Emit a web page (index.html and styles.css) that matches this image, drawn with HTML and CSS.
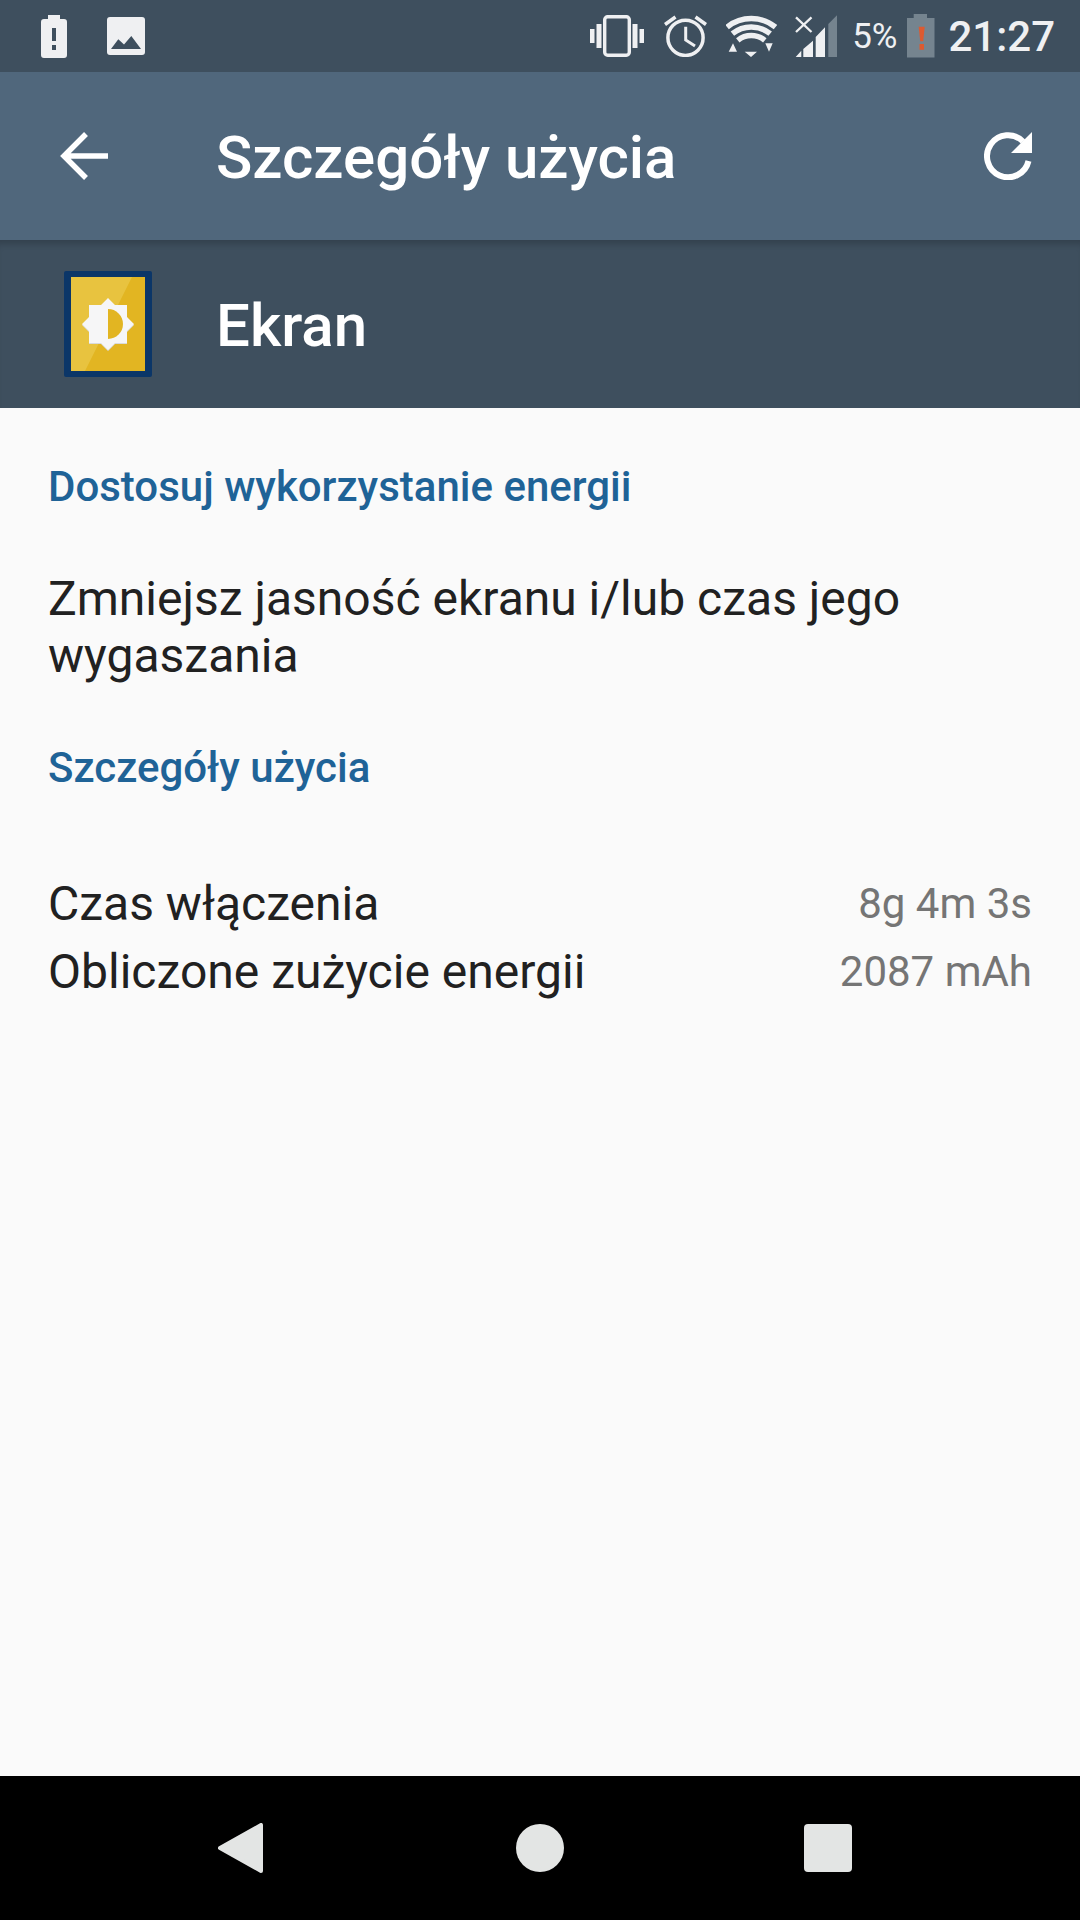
FILE: index.html
```html
<!DOCTYPE html>
<html lang="pl">
<head>
  <meta charset="UTF-8">
  <meta name="viewport" content="width=device-width, initial-scale=1.0">
  <title>Szczegóły użycia</title>
  <link rel="stylesheet" href="styles.css">
</head>
<body>
  <div class="screen">
    <div class="status-bar">
      <div class="status-left">
        <!-- battery alert -->
        <svg width="26" height="43" viewBox="0 0 26 43">
          <path fill="#eff0f2" d="M7 0h12v4h4q3 0 3 3v33q0 3-3 3H3q-3 0-3-3V7q0-3 3-3h4z"/>
          <path fill="#3e4f5e" d="M11 13h4v13h-4zM11 30h4v5h-4z"/>
        </svg>
        <!-- picture -->
        <svg width="38" height="38" viewBox="0 0 38 38">
          <rect width="38" height="38" rx="3" fill="#eff0f2"/>
          <path fill="#3e4f5e" d="M4 32l7.300-9.700 5.700 5.200 7.300-8.500 9.700 13z"/>
        </svg>
      </div>
      <div class="status-right">
        <svg class="ic-vib" width="54" height="42" viewBox="0 0 54 42">
          <rect x="14.700" y="1.700" width="24.600" height="38.600" rx="3" fill="none" stroke="#eff0f2" stroke-width="3.400"/>
          <path fill="#eff0f2" d="M0 14h4.500v14H0zM6.500 9h5v24h-5zM42.500 9h5v24h-5zM49.500 14H54v14h-4.500z"/>
        </svg>
        <svg class="ic-alarm" width="43" height="42" viewBox="0 0 43 42">
          <circle cx="21.500" cy="22.800" r="17.600" fill="none" stroke="#eff0f2" stroke-width="3.500"/>
          <path fill="none" stroke="#eff0f2" stroke-width="3" d="M21.700 11.700V25l9.300 6"/>
          <path fill="none" stroke="#eff0f2" stroke-width="3.500" d="M1 9.500L11.500 2M42 9.500L31.500 2"/>
        </svg>
        <svg class="ic-wifi" width="51" height="42" viewBox="0 0 51 42">
          <path fill="none" stroke="#eff0f2" stroke-width="5.500" d="M1.100 12.100A38.500 38.500 0 0 1 49.500 12.100M6.400 18.700A30 30 0 0 1 44.200 18.700M11.800 25.300A21.500 21.500 0 0 1 38.800 25.300"/>
          <path fill="#eff0f2" d="M18.700 36.700H31L25 42zM2.700 36.700H11L7 28.300zM39.300 28.300h7.400L43 36.700z"/>
        </svg>
        <svg class="ic-signal" width="42" height="42" viewBox="0 0 42 42">
          <path fill="#75848f" d="M33.300 9L42.300 0v42h-9z"/>
          <path fill="#eff0f2" d="M.7 42L6.300 35.700V42zM8.300 42V34L18 25.700V42zM20.700 42V22L30 12.300V42z"/>
          <path fill="none" stroke="#eff0f2" stroke-width="2.300" d="M1 2.300L16.500 17M16.500 2.300L1 17"/>
        </svg>
        <span class="batt-pct">5%</span>
        <svg class="ic-batt" width="28" height="44" viewBox="0 0 28 44">
          <path fill="#75848f" d="M6.700 0H20v4h7.500v39.500H0V4h6.700z"/>
          <path fill="#dd5a30" d="M11.700 12.700h6l-1.500 14.500h-3zM12.500 30h4.500v5.700h-4.500z"/>
        </svg>
        <span class="clock">21:27</span>
      </div>
    </div>

    <div class="toolbar">
      <svg width="48" height="48" viewBox="0 0 48 48">
        <path fill="none" stroke="#fff" stroke-width="5.500" d="M48 24H4M26 2L4 24l22 22"/>
      </svg>
      <h1 class="toolbar-title">Szczegóły użycia</h1>
      <svg width="48" height="48" viewBox="0 0 48 48">
        <path fill="none" stroke="#fff" stroke-width="6" d="M44.500 29A21 21 0 1 1 39 9.500"/>
        <path fill="#fff" d="M48 0v21H27z"/>
      </svg>
    </div>

    <div class="app-header">
      <svg width="88" height="106" viewBox="0 0 88 106">
        <rect width="88" height="106" rx="2" fill="#0b3668"/>
        <rect x="7" y="6" width="74" height="94" fill="#e2b522"/>
        <path fill="#e8c33f" d="M7 6h61L21 100H7z"/>
        <path fill="#d9dadb" d="M44 28l26 26-7 7v12H51l-7 7-7-7H25V61l-7-7z"/>
        <path fill="#f6f6f7" d="M44 27l7 7h12v12l7 7-7 7v12H51l-7 7-7-7H25V60l-7-7 7-7V34h12z"/>
        <path fill="#e2b522" d="M44 38a15 15 0 0 1 0 30z"/>
      </svg>
      <div class="app-name">Ekran</div>
    </div>

    <div class="content">
      <div class="section-title first">Dostosuj wykorzystanie energii</div>
      <p class="tip">Zmniejsz jasność ekranu i/lub czas jego wygaszania</p>
      <div class="section-title second">Szczegóły użycia</div>
      <div class="usage">
        <div class="usage-row">
          <span class="usage-label">Czas włączenia</span>
          <span class="usage-value">8g 4m 3s</span>
        </div>
        <div class="usage-row">
          <span class="usage-label">Obliczone zużycie energii</span>
          <span class="usage-value">2087 mAh</span>
        </div>
      </div>
    </div>

    <div class="nav-bar">
      <svg width="45" height="50" viewBox="0 0 45 50">
        <path fill="#e3e5e4" stroke="#e3e5e4" stroke-width="4" stroke-linejoin="round" d="M2 25L43 2v46z"/>
      </svg>
      <div class="nav-home"></div>
      <div class="nav-recent"></div>
    </div>
  </div>
</body>
</html>
```
FILE: styles.css
```css
* {
  margin: 0;
  padding: 0;
  box-sizing: border-box;
}

body {
  font-family: 'Roboto', 'Liberation Sans', sans-serif;
  background: #fafafa;
  color: #212121;
}

.screen {
  width: 1080px;
  height: 1920px;
  display: flex;
  flex-direction: column;
  overflow: hidden;
}

.status-bar {
  height: 72px;
  background: #3e4f5e;
  display: flex;
  align-items: center;
  justify-content: space-between;
  padding: 0 25px 0 41px;
  color: #eff0f2;
}

.status-left {
  display: flex;
  align-items: center;
  gap: 40px;
}

.status-right {
  display: flex;
  align-items: center;
}

.ic-vib { margin-right: 20px; }
.ic-alarm { margin-right: 19px; }
.ic-wifi { margin-right: 18px; }
.ic-signal { margin-right: 15px; }

.batt-pct {
  font-size: 35px;
  margin-right: 10px;
}

.ic-batt { margin-right: 13px; }

.clock {
  font-size: 42px;
  font-weight: 500;
}

.toolbar {
  height: 168px;
  background: #50677c;
  display: flex;
  align-items: center;
  padding: 0 48px 0 60px;
}

.toolbar-title {
  flex: 1;
  margin-left: 108px;
  padding-top: 2px;
  font-size: 60px;
  font-weight: 500;
  color: #fff;
}

.app-header {
  height: 168px;
  background: #3e4f5e;
  display: flex;
  align-items: center;
  padding: 0 0 0 64px;
  box-shadow: inset 0 8px 6px -4px rgba(0, 0, 0, 0.18);
}

.app-name {
  margin-left: 64px;
  padding-top: 2px;
  font-size: 60px;
  font-weight: 500;
  color: #fff;
}

.content {
  flex: 1;
  padding: 0 48px;
}

.section-title {
  font-size: 42px;
  font-weight: 500;
  color: #1f6397;
}

.section-title.first { margin-top: 54px; }
.section-title.second { margin-top: 59px; }

.tip {
  margin-top: 59px;
  font-size: 48px;
  line-height: 57px;
}

.usage {
  margin-top: 77px;
}

.usage-row {
  display: flex;
  justify-content: space-between;
  align-items: center;
  height: 68px;
}

.usage-label {
  font-size: 48px;
}

.usage-value {
  font-size: 42px;
  color: #757575;
}

.nav-bar {
  height: 144px;
  background: #000;
  display: flex;
  align-items: center;
  padding-left: 218px;
}

.nav-home {
  width: 48px;
  height: 48px;
  margin-left: 253px;
  border-radius: 50%;
  background: #e3e5e4;
}

.nav-recent {
  width: 48px;
  height: 48px;
  margin-left: 240px;
  border-radius: 4px;
  background: #e3e5e4;
}
```
